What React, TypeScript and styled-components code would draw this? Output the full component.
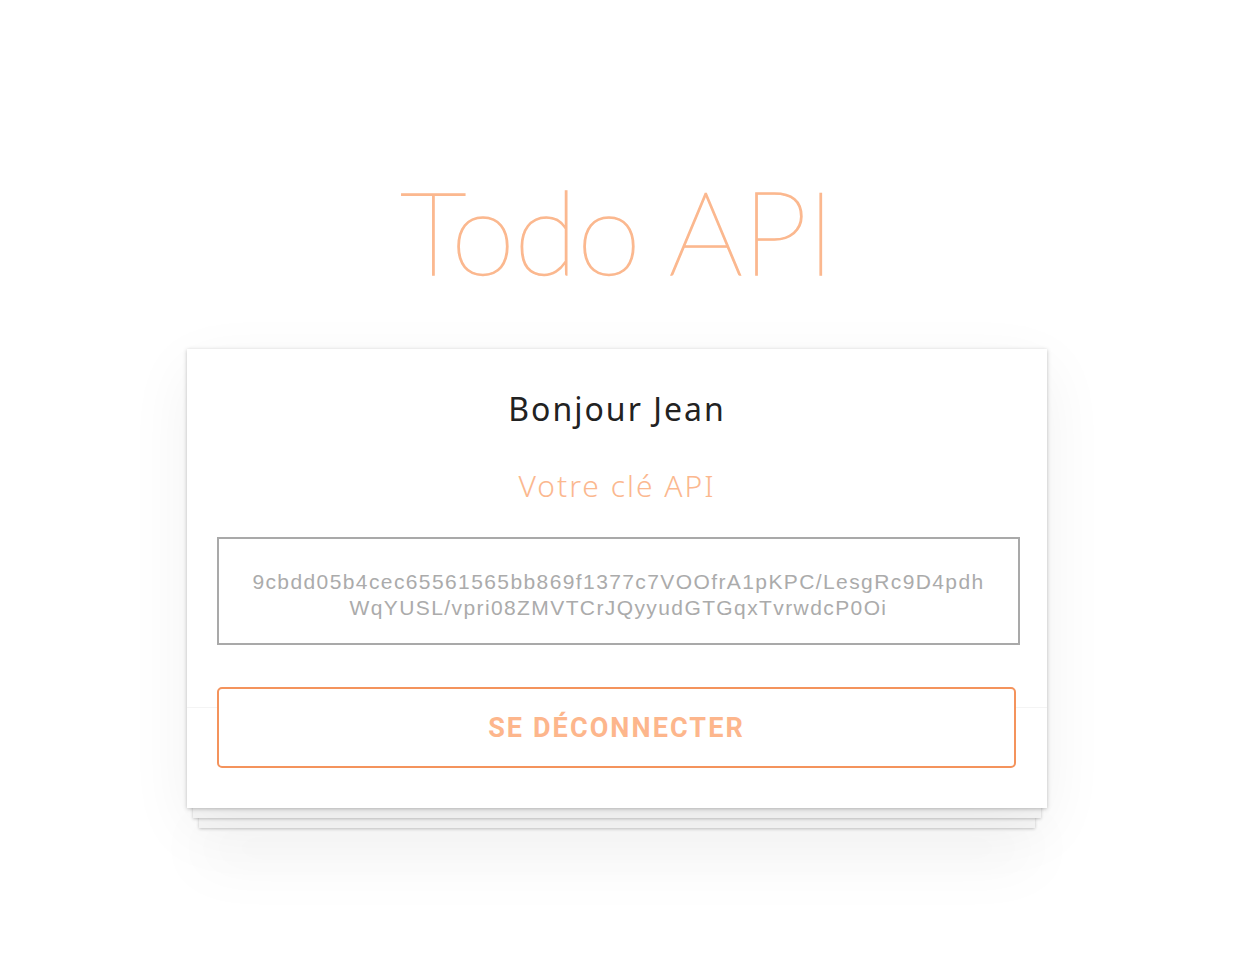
import React from "react";
import styled, { createGlobalStyle } from "styled-components";

const Global = createGlobalStyle`
  html, body { margin: 0; padding: 0; background: #ffffff; }
  body { font-family: "Noto Sans", "Liberation Sans", sans-serif; }
`;

const Page = styled.main`
  display: flex;
  flex-direction: column;
  align-items: center;
  padding-top: 160px;
  min-height: 968px;
  box-sizing: border-box;
`;

const Title = styled.h1`
  margin: 0;
  font-family: "Lato", "Open Sans", sans-serif;
  font-weight: 100;
  font-size: 117px;
  line-height: 140px;
  color: #fbb88f;
  -webkit-text-stroke: 1.3px #fbb88f;
  letter-spacing: -1px;
`;

const Stack = styled.div`
  position: relative;
  margin-top: 49px;
  width: 860px;
  &::before, &::after {
    content: "";
    position: absolute;
    background: #f7f7f7;
    box-shadow: 0 1px 3px rgba(0,0,0,0.22);
  }
  &::before {
    left: 6px; right: 6px; bottom: -10px; height: 20px; z-index: 1;
  }
  &::after {
    left: 12px; right: 12px; bottom: -20px; height: 20px; z-index: 0;
    box-shadow: 0 1px 3px rgba(0,0,0,0.22), 0 30px 60px rgba(0,0,0,0.08);
  }
`;

const Card = styled.section`
  position: relative;
  z-index: 2;
  background: #ffffff;
  box-shadow: 0 1px 4px rgba(0,0,0,0.25), 0 20px 60px rgba(0,0,0,0.06);
  padding: 38px 30px 40px;
  display: flex;
  flex-direction: column;
  align-items: stretch;
  &::before {
    content: "";
    position: absolute;
    left: 0; right: 0; top: 358px;
    height: 1px;
    background: #f4f4f4;
  }
`;

const Greeting = styled.h2`
  margin: 0;
  text-align: center;
  font-family: "Noto Sans", sans-serif;
  font-weight: 400;
  font-size: 32px;
  letter-spacing: 2px;
  line-height: 44px;
  color: #222222;
`;

const KeyLabel = styled.h3`
  margin: 33px 0 0;
  text-align: center;
  font-family: "Noto Sans", sans-serif;
  font-weight: 300;
  font-size: 30px;
  letter-spacing: 2px;
  line-height: 44px;
  color: #fbb88f;
`;

const KeyBox = styled.div`
  margin-top: 29px;
  height: 108px;
  box-sizing: border-box;
  border: 2px solid #a9a9a9;
  display: flex;
  align-items: center;
  justify-content: center;
  padding: 8px 20px 0;
  text-align: center;
  font-family: "Liberation Sans", Arial, sans-serif;
  font-size: 21px;
  letter-spacing: 1.4px;
  line-height: 26px;
  color: #ababab;
  width: 803px;
  word-break: break-all;
`;

const LogoutButton = styled.button`
  position: relative;
  margin-top: 42px;
  width: 799px;
  height: 81px;
  background: #ffffff;
  border: 2px solid #f4935c;
  border-radius: 5px;
  font-family: "Roboto", "Liberation Sans", sans-serif;
  font-weight: 700;
  font-size: 27px;
  letter-spacing: 2.1px;
  color: #fdb68c;
  cursor: pointer;
`;

export default function App() {
  return (
    <>
      <Global />
      <Page>
        <Title>Todo API</Title>
        <Stack>
          <Card>
            <Greeting>Bonjour Jean</Greeting>
            <KeyLabel>Votre clé API</KeyLabel>
            <KeyBox>
              9cbdd05b4cec65561565bb869f1377c7VOOfrA1pKPC/LesgRc9D4pdh
              <br />
              WqYUSL/vpri08ZMVTCrJQyyudGTGqxTvrwdcP0Oi
            </KeyBox>
            <LogoutButton>SE DÉCONNECTER</LogoutButton>
          </Card>
        </Stack>
      </Page>
    </>
  );
}
